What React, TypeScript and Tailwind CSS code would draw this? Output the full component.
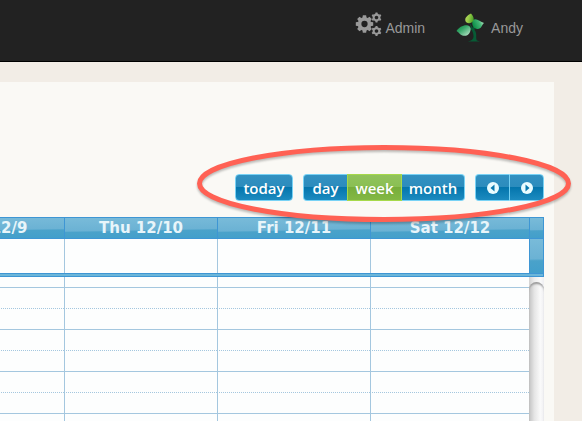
import React from "react";

const days = ["Wed 12/9", "Thu 12/10", "Fri 12/11", "Sat 12/12"];
const slots = Array.from({ length: 24 }, (_, i) => i);

function Gear({ x, y, r, teeth }: { x: number; y: number; r: number; teeth: number }) {
  return (
    <g transform={`translate(${x} ${y})`}>
      <circle r={r * 0.57} fill="none" stroke="currentColor" strokeWidth={r * 0.42} />
      {Array.from({ length: teeth }, (_, i) => (
        <path
          key={i}
          d={`M${-r * 0.25} ${-r * 0.66}L${-r * 0.19} ${-r}H${r * 0.19}L${r * 0.25} ${-r * 0.66}Z`}
          fill="currentColor"
          transform={`rotate(${(i * 360) / teeth})`}
        />
      ))}
    </g>
  );
}

function GearsIcon() {
  return (
    <svg className="h-6 w-7" viewBox="0 0 28 24" aria-hidden="true">
      <Gear x={9.5} y={12} r={8.7} teeth={8} />
      <Gear x={21.5} y={5.5} r={5} teeth={6} />
      <Gear x={21.5} y={19} r={5} teeth={6} />
    </svg>
  );
}

function PlantIcon() {
  return (
    <svg className="h-[30px] w-7" viewBox="0 0 28 30" aria-hidden="true">
      <defs>
        <linearGradient id="leafLeft" x1="0" y1="0" x2="1" y2="1">
          <stop offset="0" stopColor="#00883a" />
          <stop offset="0.4" stopColor="#39a76a" />
          <stop offset="1" stopColor="#c5ead1" />
        </linearGradient>
        <linearGradient id="leafRight" x1="0" y1="0.6" x2="1" y2="0.2">
          <stop offset="0" stopColor="#078b42" />
          <stop offset="0.6" stopColor="#42b575" />
          <stop offset="1" stopColor="#c4edcf" />
        </linearGradient>
        <linearGradient id="leafTop" x1="0" y1="0" x2="1" y2="0.3">
          <stop offset="0" stopColor="#b8dc62" />
          <stop offset="0.5" stopColor="#9acb48" />
          <stop offset="1" stopColor="#4fa52c" />
        </linearGradient>
      </defs>
      <path d="M12 29.500C15.500 28.500 17.500 27.500 17.500 24C17.500 20 15 17 13.500 10.500C15.500 15 18 16.500 19.500 19.500C21 23 19.500 27 21 28.500L24 29.500Z" fill="#075b35" />
      <path d="M13 17C15 16 16.500 17 17.500 19M18 18C17 15 17.500 14 19 13" fill="none" stroke="#075b35" strokeWidth="1.600" />
      <path d="M0.500 19C3 15 8 12.500 12 13.500C15.500 14.500 15 18.500 13.500 21C11.500 24.500 7 24.500 4.500 22.500C3 21 2 20 0.500 19Z" fill="url(#leafLeft)" />
      <path d="M28 11C24 9.500 20 5.500 17 8C15 11.500 17 16.500 21 17C25.500 17.500 25.500 13 28 11Z" fill="url(#leafRight)" />
      <path d="M15 1.500C11 3.500 8.500 6 9.500 9C10 11 13 12 15.500 10.500C19 8.500 18 5 15 1.500Z" fill="url(#leafTop)" />
    </svg>
  );
}

function ArrowIcon({ next = false }: { next?: boolean }) {
  return (
    <svg className="size-3" viewBox="0 0 12 12" aria-hidden="true">
      <circle cx="6" cy="6" r="6" fill="#e9fcff" />
      <path d={next ? "M4.500 2.500L8.500 6L4.500 9.500Z" : "M7.500 2.500L3.500 6L7.500 9.500Z"} fill="#0878ae" />
    </svg>
  );
}

const blueButton =
  "flex h-full items-center justify-center border border-[#78d2f5] bg-[linear-gradient(#3291c1_0%,#2c8cbd_48%,#0475ac_49%,#1c8bc0_100%)]";

function Toolbar() {
  return (
    <div className="relative mr-[10px] flex h-[27px] justify-end gap-[10px] font-['Open_Sans','Noto_Sans',sans-serif] text-[15px] leading-5 font-semibold text-white">
      <button className={`${blueButton} w-[58px] rounded`}>today</button>
      <div className="flex w-[162px]">
        <button className={`${blueButton} w-[44px] rounded-l border-r-0`}>day</button>
        <button className="flex h-full w-[55px] items-center justify-center border border-[#a6d94a] bg-[linear-gradient(#91c35c_0%,#8abf53_48%,#77ad3b_49%,#83b844_100%)]">
          week
        </button>
        <button className={`${blueButton} w-[63px] rounded-r border-l-0`}>month</button>
      </div>
      <div className="flex w-[69px]">
        <button aria-label="Previous" className={`${blueButton} w-[34px] rounded-l border-r-0`}>
          <ArrowIcon />
        </button>
        <button aria-label="Next" className={`${blueButton} w-[35px] rounded-r`}>
          <ArrowIcon next />
        </button>
      </div>
      <svg
        className="pointer-events-none absolute -top-8 -right-8 h-[84px] w-[384px]"
        viewBox="0 0 384 84"
        aria-hidden="true"
      >
        <ellipse
          cx="192"
          cy="41.500"
          rx="184.500"
          ry="36"
          fill="none"
          stroke="#ff6154"
          strokeWidth="5"
          className="drop-shadow-[0_2px_1px_#00000040]"
        />
      </svg>
    </div>
  );
}

function Columns() {
  return (
    <colgroup>
      <col className="w-[153px]" />
      <col className="w-[153px]" />
      <col className="w-[153px]" />
      <col />
      <col className="w-[15px]" />
    </colgroup>
  );
}

const glossy = "bg-[linear-gradient(179deg,#79bbd9_0%,#6bb2d4_58%,#4aa2ca_64%,#429fcb_100%)]";

function Calendar() {
  return (
    <div className="mt-4 mr-[10px] -ml-[89px] bg-[#fdfefe]">
      <table className="w-full table-fixed border-separate border-spacing-0">
        <Columns />
        <thead>
          <tr className="h-[22px]">
            {days.map((day) => (
              <th
                key={day}
                className={`${glossy} border-y border-l border-[#3e96d4] p-0 font-['DejaVu_Sans',sans-serif] text-[15px] leading-5 font-bold text-[#e8f5fa]`}
              >
                {day}
              </th>
            ))}
            <th className={`${glossy} border border-[#3e96d4] p-0`} />
          </tr>
        </thead>
        <tbody>
          <tr className="h-[34px]">
            {days.map((day) => (
              <td key={day} className="border-l border-[#a4c7df] p-0" />
            ))}
            <td className={`${glossy} border-x border-[#3e96d4] p-0`} />
          </tr>
        </tbody>
      </table>
      <div className="h-1 border-y border-r border-[#3e96d4] bg-[#6cb6d9]" />
      <div className="flex">
        <table className="w-full table-fixed border-separate border-spacing-0">
          <colgroup>
            <col className="w-[153px]" />
            <col className="w-[153px]" />
            <col className="w-[153px]" />
            <col />
          </colgroup>
          <tbody>
            <tr className="h-[10px]">
              {days.map((day) => (
                <td key={day} className="border-l border-[#a4c7df] p-0" />
              ))}
            </tr>
            {slots.map((slot) => (
              <tr key={slot} className="h-[21px]">
                {days.map((day) => (
                  <td
                    key={day}
                    className={`border-t border-l border-[#a4c7df] p-0 ${slot % 2 ? "[border-top-style:dotted]" : ""}`}
                  />
                ))}
              </tr>
            ))}
          </tbody>
        </table>
        <div className="w-[15px] shrink-0 bg-[linear-gradient(90deg,#d2d2d2,#ededed_35%,#fafafa_75%,#efeff2)]">
          <div className="h-[5px]" />
          <div className="h-full rounded-t-full bg-[linear-gradient(90deg,#c2c2c2,#e5e5e5_35%,#fafafa_75%,#efeff2)] shadow-[inset_0_3px_2px_-1px_#999999]" />
        </div>
      </div>
    </div>
  );
}

export default function App() {
  return (
    <div className="flex h-screen flex-col overflow-hidden bg-[#f2ede6]">
      <header className="shrink-0 border-b border-black bg-[#222222] pr-[59px] pb-[18px] pt-3 font-['Liberation_Sans',sans-serif] text-sm text-[#999999]">
        <nav className="flex justify-end gap-[31px]">
          <a href="#admin" className="flex h-[31px] items-start gap-[2px]">
            <GearsIcon />
            <span className="pt-[6px] leading-5">Admin</span>
          </a>
          <a href="#andy" className="flex h-[31px] items-start gap-[7px]">
            <PlantIcon />
            <span className="pt-[6px] leading-5">Andy</span>
          </a>
        </nav>
      </header>
      <main className="mt-5 mr-7 min-h-0 flex-1 bg-[#faf9f5] pt-[92px]">
        <Toolbar />
        <Calendar />
      </main>
    </div>
  );
}
